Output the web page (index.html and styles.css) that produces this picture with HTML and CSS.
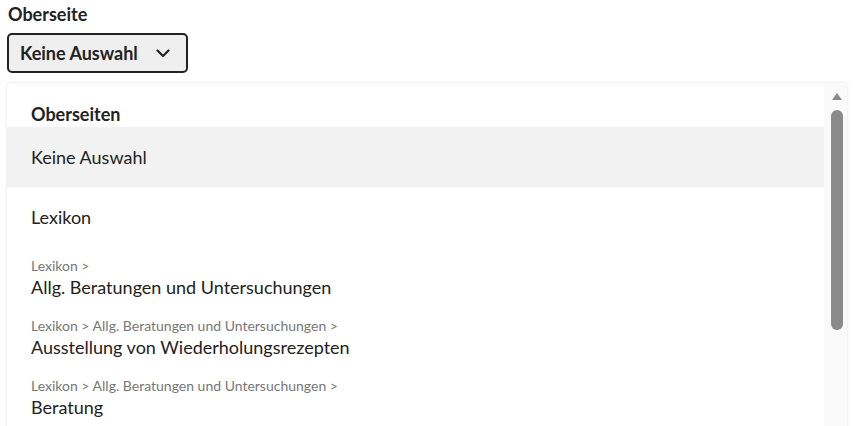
FILE: index.html
```html
<!DOCTYPE html>
<html lang="de">
<head>
<meta charset="utf-8">
<title>Oberseite</title>
<link rel="stylesheet" href="styles.css">
</head>
<body>
<div class="page">
  <label class="field-label">Oberseite</label>
  <div class="select">
    <span class="select-value">Keine Auswahl</span>
    <svg class="chevron" width="14" height="9" viewBox="0 0 14 9"><path d="M1.5 1.5 L7 7 L12.5 1.5" fill="none" stroke="#222" stroke-width="2.2" stroke-linecap="round" stroke-linejoin="round"/></svg>
  </div>
  <div class="panel">
    <div class="list">
      <div class="group-title">Oberseiten</div>
      <div class="option active"><span class="main">Keine Auswahl</span></div>
      <div class="option"><span class="main">Lexikon</span></div>
      <div class="option two"><span class="crumb">Lexikon &gt;</span><span class="main">Allg. Beratungen und Untersuchungen</span></div>
      <div class="option two"><span class="crumb">Lexikon &gt; Allg. Beratungen und Untersuchungen &gt;</span><span class="main">Ausstellung von Wiederholungsrezepten</span></div>
      <div class="option two"><span class="crumb">Lexikon &gt; Allg. Beratungen und Untersuchungen &gt;</span><span class="main">Beratung</span></div>
    </div>
    <div class="scrollbar">
      <div class="arrow"></div>
      <div class="thumb"></div>
    </div>
  </div>
</div>
</body>
</html>
```
FILE: styles.css
```css
html, body {
  margin: 0;
  padding: 0;
  background: #fff;
  overflow: hidden;
  height: 426px;
}
body {
  font-family: Lato, "Noto Sans", sans-serif;
  color: #222;
}
.page {
  padding: 3px 7px 0 7px;
  display: flex;
  flex-direction: column;
  align-items: flex-start;
}
.field-label {
  font-weight: 700;
  font-size: 18px;
  line-height: 22px;
  padding-left: 1px;
  color: #222;
}
.select {
  margin-top: 8px;
  box-sizing: border-box;
  width: 181px;
  height: 40px;
  border: 2px solid #222;
  border-radius: 5px;
  background: #efefef;
  display: flex;
  align-items: center;
  padding: 0 16px 0 11px;
  justify-content: space-between;
}
.select-value {
  font-weight: 700;
  font-size: 18px;
  color: #222;
}
.chevron {
  display: block;
}
.panel {
  margin-top: 10px;
  width: 840px;
  height: 400px;
  background: #fff;
  border-radius: 4px;
  box-shadow: 0 0 3px rgba(0, 0, 0, 0.14);
  display: flex;
  overflow: hidden;
}
.list {
  flex: 1;
  display: flex;
  flex-direction: column;
}
.group-title {
  font-weight: 700;
  font-size: 18px;
  line-height: 22px;
  padding: 20px 24px 2px;
  color: #222;
}
.option {
  height: 60px;
  padding: 0 24px;
  display: flex;
  flex-direction: column;
  justify-content: center;
}
.option.two {
  padding-top: 1px;
  box-sizing: border-box;
}
.option.active {
  background: #f2f2f2;
}
.main {
  font-size: 18px;
  line-height: 24px;
  color: #222;
}
.crumb {
  font-size: 14px;
  line-height: 18px;
  color: #777;
}
.scrollbar {
  width: 23px;
  background: #fafafa;
  display: flex;
  flex-direction: column;
  align-items: center;
  padding-top: 10px;
}
.arrow {
  width: 0;
  height: 0;
  border-left: 5px solid transparent;
  border-right: 5px solid transparent;
  border-bottom: 7px solid #8a8a8a;
  margin-left: 2px;
}
.thumb {
  margin-top: 10px;
  margin-left: 2px;
  width: 12px;
  height: 220px;
  background: #8a8a8a;
  border-radius: 6px;
}
```
